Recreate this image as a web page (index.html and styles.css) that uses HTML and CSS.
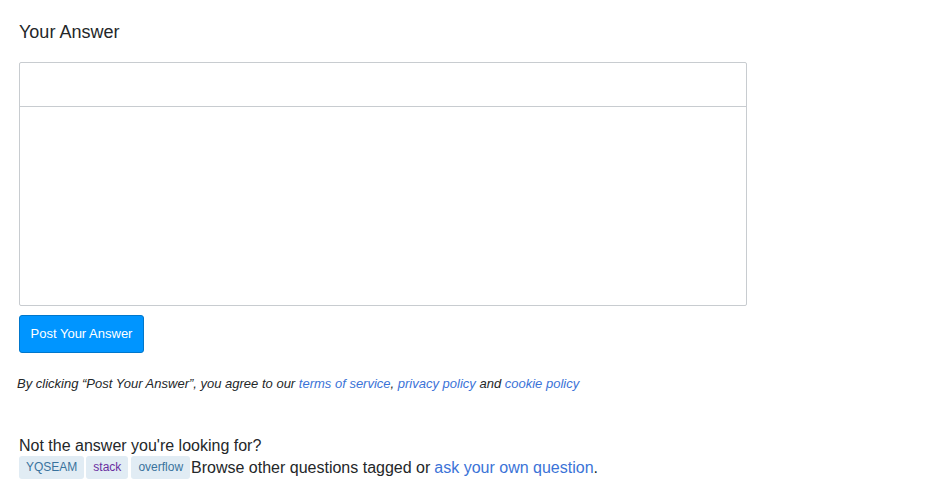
FILE: index.html
```html
<!DOCTYPE html>
<html>
<head>
<meta charset="utf-8">
<link rel="stylesheet" href="styles.css">
</head>
<body>
<div class="page">
  <h2 class="title">Your Answer</h2>
  <div class="editor">
    <div class="toolbar"></div>
    <div class="textarea"></div>
  </div>
  <button class="post">Post Your Answer</button>
  <p class="terms">By clicking “Post Your Answer”, you agree to our <a href="#">terms of service</a>, <a href="#">privacy policy</a> and <a href="#">cookie policy</a></p>
  <div class="notanswer">
    <div class="q">Not the answer you're looking for?</div>
    <div class="browse"><span class="tag">YQSEAM</span><span class="tag visited">stack</span><span class="tag">overflow</span>Browse other questions tagged or <a href="#">ask your own question</a>.</div>
  </div>
</div>
</body>
</html>
```
FILE: styles.css
```css
html, body { margin: 0; padding: 0; background: #fff; }
body { font-family: "Liberation Sans", Arial, sans-serif; color: #242729; }
.page { padding: 20px 0 0 19px; width: 728px; }
.title { font-size: 18px; font-weight: normal; margin: 0; line-height: 24px; height: 42px; }
.editor { border: 1px solid #c8ccd0; border-radius: 2px; height: 242px; display: flex; flex-direction: column; }
.toolbar { height: 43px; border-bottom: 1px solid #c8ccd0; }
.textarea { flex: 1; }
.post { margin-top: 9px; height: 38px; width: 125px; background: #0095ff; border: 1px solid #07c; border-radius: 3px; color: #fff; font-family: "Liberation Sans", Arial, sans-serif; font-size: 13px; line-height: 15px; padding: 0 0 2px; display: block; }
.terms { font-style: italic; font-size: 13px; color: #242729; margin: 0 0 0 -2px; padding-top: 23px; line-height: 16px; }
.terms a { color: #3b73d7; text-decoration: none; }
.notanswer { margin-top: 44px; font-size: 16px; line-height: 20px; }
.browse { margin-top: 0; display: flex; align-items: center; }
.tag { display: inline-block; background: #e1ecf4; color: #39739d; font-size: 12px; line-height: 23px; height: 23px; padding: 0 7px; border-radius: 3px; margin-right: 2px; }
.tag.visited { color: #6a2ea0; margin-right: 3px; }
.tag:nth-child(3) { margin-right: 1px; }
.browse a { color: #3b73d7; text-decoration: none; margin-left: 4px; }
```
